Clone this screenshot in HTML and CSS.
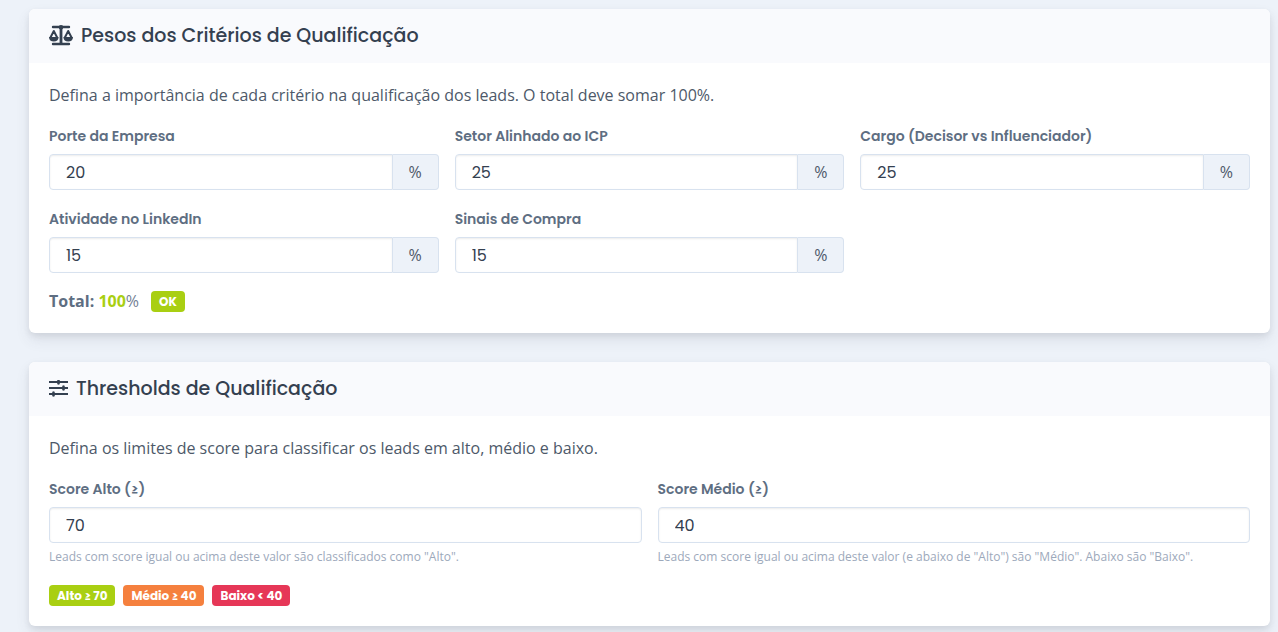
FILE: index.html
```
<!DOCTYPE html>
<html lang="pt-BR">

<head>
    <meta charset="UTF-8">
    <meta name="viewport" content="width=device-width, initial-scale=1.0">
    <title>Qualificação de Leads</title>
    <link rel="stylesheet" href="styles.css">
</head>

<body>
    <main class="page">
        <!-- Pesos -->
        <section class="card">
            <div class="card-header">
                <svg class="icon-scale" viewBox="0 0 24 22" aria-hidden="true">
                    <path d="M4 2h16M4 19h16" stroke-width="2.400" stroke-linecap="round"/>
                    <path d="M12 1v18" stroke-width="2.800"/>
                    <path d="M1.200 13 4.800 6l3.600 7M15.600 13l3.600-7 3.600 7" stroke-width="2" stroke-linejoin="round"/>
                    <path d="M0 12h9.600c0 3-2 4.600-4.800 4.600S0 15 0 12zM14.400 12H24c0 3-2 4.600-4.800 4.600s-4.800-1.600-4.800-4.600z" fill="currentColor" stroke="none"/>
                    <circle cx="12" cy="2.300" r="2.300" fill="currentColor" stroke="none"/>
                </svg>
                <h2 class="card-title">Pesos dos Critérios de Qualificação</h2>
            </div>
            <div class="card-body">
                <p class="intro">Defina a importância de cada critério na qualificação dos leads. O total deve somar 100%.</p>
                <div class="fields cols-3">
                    <div class="field">
                        <label for="porte">Porte da Empresa</label>
                        <div class="input-group">
                            <input type="text" inputmode="numeric" id="porte" value="20">
                            <span class="addon">%</span>
                        </div>
                    </div>
                    <div class="field">
                        <label for="setor">Setor Alinhado ao ICP</label>
                        <div class="input-group">
                            <input type="text" inputmode="numeric" id="setor" value="25">
                            <span class="addon">%</span>
                        </div>
                    </div>
                    <div class="field">
                        <label for="cargo">Cargo (Decisor vs Influenciador)</label>
                        <div class="input-group">
                            <input type="text" inputmode="numeric" id="cargo" value="25">
                            <span class="addon">%</span>
                        </div>
                    </div>
                    <div class="field">
                        <label for="atividade">Atividade no LinkedIn</label>
                        <div class="input-group">
                            <input type="text" inputmode="numeric" id="atividade" value="15">
                            <span class="addon">%</span>
                        </div>
                    </div>
                    <div class="field">
                        <label for="sinais">Sinais de Compra</label>
                        <div class="input-group">
                            <input type="text" inputmode="numeric" id="sinais" value="15">
                            <span class="addon">%</span>
                        </div>
                    </div>
                </div>
                <div class="total">
                    <span><strong>Total: <span class="total-value">100</span></strong>%</span>
                    <span class="badge badge-success">OK</span>
                </div>
            </div>
        </section>

        <!-- Thresholds -->
        <section class="card">
            <div class="card-header">
                <svg class="icon-tune" viewBox="0 0 19 18" aria-hidden="true">
                    <path d="M0 2h19M0 8h19M0 14h19" stroke-width="2.200"/>
                    <path d="M9.500 0v4.500M14.500 5.500v5M4.500 11.500v5" stroke-width="2"/>
                    <path d="M9.500-.5 12 2 9.500 4.500 7 2zM14.500 5.500 17 8l-2.500 2.500L12 8zM4.500 11.500 7 14l-2.500 2.500L2 14z" fill="currentColor" stroke="none"/>
                </svg>
                <h2 class="card-title">Thresholds de Qualificação</h2>
            </div>
            <div class="card-body">
                <p class="intro">Defina os limites de score para classificar os leads em alto, médio e baixo.</p>
                <div class="fields cols-2">
                    <div class="field">
                        <label for="alto">Score Alto (≥)</label>
                        <input type="text" inputmode="numeric" id="alto" value="70">
                        <small class="help">Leads com score igual ou acima deste valor são classificados como "Alto".</small>
                    </div>
                    <div class="field">
                        <label for="medio">Score Médio (≥)</label>
                        <input type="text" inputmode="numeric" id="medio" value="40">
                        <small class="help">Leads com score igual ou acima deste valor (e abaixo de "Alto") são "Médio". Abaixo são "Baixo".</small>
                    </div>
                </div>
                <div class="badges">
                    <span class="badge badge-success">Alto ≥ 70</span>
                    <span class="badge badge-warning">Médio ≥ 40</span>
                    <span class="badge badge-danger">Baixo &lt; 40</span>
                </div>
            </div>
        </section>
    </main>
</body>

</html>
```
FILE: styles.css
```
/* Global */
* {
    box-sizing: border-box;
}

body {
    margin: 0;
    font-family: "Open Sans", "Noto Sans", sans-serif;
    font-size: 16px;
    line-height: 24px;
    color: #4d5969;
    background-color: #edf2f9;
}

.page {
    display: flex;
    flex-direction: column;
    gap: 29px;
    padding: 9px 8px 6px 29px;
}

/* Cards */
.card {
    background-color: #fff;
    border-radius: 6px;
    box-shadow: 0 7px 14px rgba(65, 69, 88, 0.1), 0 3px 6px rgba(0, 0, 0, 0.07);
}

.card-header {
    display: flex;
    align-items: center;
    gap: 8px;
    height: 54px;
    padding: 0 20px;
    color: #344050;
    background-color: #f9fafd;
    border-radius: 6px 6px 0 0;
}

.card-header svg {
    flex: none;
    fill: none;
    stroke: currentColor;
}

.icon-scale {
    width: 24px;
    height: 22px;
}

.icon-tune {
    width: 19px;
    height: 18px;
}

.card-title {
    margin: 0;
    font-family: Poppins, Inter, sans-serif;
    font-size: 19px;
    font-weight: 500;
}

.card-body {
    padding: 20px;
}

.intro {
    margin: 0 0 17px;
}

/* Form */
.fields {
    display: grid;
    gap: 17px 16px;
}

.cols-3 {
    grid-template-columns: repeat(3, 1fr);
}

.cols-2 {
    grid-template-columns: repeat(2, 1fr);
}

.field {
    display: flex;
    flex-direction: column;
}

.field label {
    margin-bottom: 6px;
    font-family: Poppins, Inter, sans-serif;
    font-size: 14px;
    font-weight: 600;
    color: #5e6e82;
}

.field input {
    width: 100%;
    min-width: 0;
    height: 36px;
    padding: 0 16px;
    font-family: Poppins, Inter, sans-serif;
    font-size: 16px;
    color: #344050;
    background-color: #fff;
    border: 1px solid #d8e2ef;
    border-radius: 4px;
    box-shadow: inset 0 1px 2px rgba(0, 0, 0, 0.08);
}

.input-group {
    display: flex;
}

.input-group input {
    flex: 1;
    border-radius: 4px 0 0 4px;
}

.addon {
    display: flex;
    align-items: center;
    justify-content: center;
    width: 46px;
    background-color: #edf2f9;
    border: 1px solid #d8e2ef;
    border-left: 0;
    border-radius: 0 4px 4px 0;
}

.help {
    margin-top: 4px;
    font-size: 12px;
    line-height: 20px;
    color: #9da9bb;
}

/* Total and badges */
.total {
    display: flex;
    align-items: center;
    gap: 12px;
    margin-top: 16px;
    color: #748194;
}

.total strong {
    color: #5e6e82;
}

.total .total-value {
    color: #a9cf12;
}

.badges {
    display: flex;
    gap: 8px;
    margin-top: 18px;
}

.badge {
    padding: 0 8px;
    font-family: Poppins, Inter, sans-serif;
    font-size: 12px;
    font-weight: 700;
    line-height: 21px;
    color: #fff;
    border-radius: 4px;
}

.badge-success {
    background-color: #a9cf12;
}

.badge-warning {
    background-color: #f5803e;
}

.badge-danger {
    background-color: #e63757;
}
```
